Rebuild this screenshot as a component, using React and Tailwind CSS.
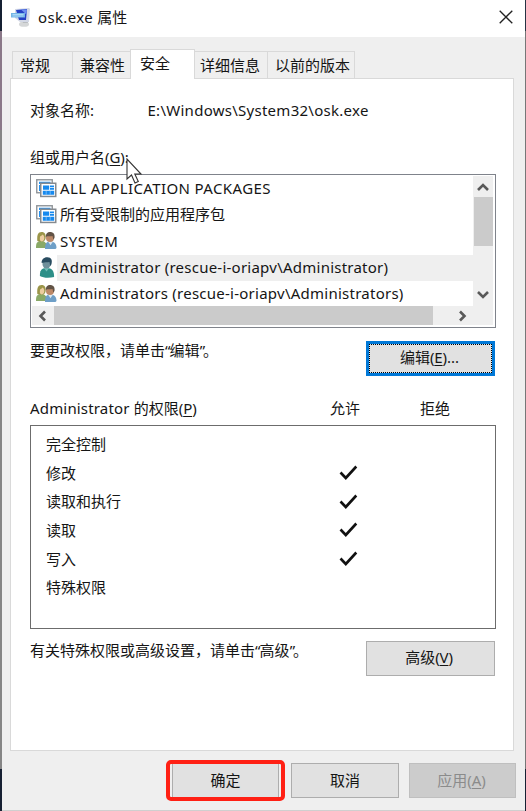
import React from 'react';

function T({ children, className = '' }) {
  return <span className={`whitespace-pre ${className}`}>{children}</span>;
}

function Key({ k }) {
  return (
    <span className="tracking-[-0.1px]">
      (<span className="underline decoration-1 underline-offset-2">{k}</span>)
    </span>
  );
}

function Quoted({ children }) {
  return (
    <>
      <span className="tracking-[-0.8px]">“</span>
      {children}
      <span className="tracking-[-2px]">”</span>
    </>
  );
}

function AppIcon() {
  return (
    <svg width="21" height="21" viewBox="0 0 21 21">
      <ellipse cx="13" cy="17.2" rx="5" ry="2.6" fill="#d5d7d8" />
      <path d="M11 13h5l1 3h-5z" fill="#b9bdc0" />
      <path d="M4 2l14-1 1 1-1 13-9 0-5-4z" fill="#d3d8e6" />
      <path d="M5 3l11-1-1 11H8z" fill="#2440c4" />
      <path d="M10 2.5h6l-.7 5z" fill="#6d8df0" />
      <path d="M0 6h14v4.5H0z" fill="#74b5e6" />
      <path d="M1.5 7.5h11M1.5 9h11" stroke="#b9e0fa" strokeWidth=".8" />
    </svg>
  );
}

function PackageIcon() {
  return (
    <svg width="21" height="19" viewBox="0 0 21 19">
      <rect x=".75" y=".75" width="15.5" height="13" fill="#fff" stroke="#90959a" strokeWidth="1.4" />
      <path d="M3 2.800h11.500V5H3zM3 6h2v6H3z" fill="#2490ee" />
      <rect x="4.75" y="4.25" width="15" height="13.2" fill="#fff" stroke="#858a8f" strokeWidth="1.5" />
      <path d="M7 6.500h6.200v4.200H7zM14 6.500h4v1.700h-4zM14 9h4v1.700h-4zM6.800 11.800h11.400v4H6.800z" fill="#1689ee" />
      <path d="M10.200 12v3.600M14.200 12v3.600" stroke="#a8d5fa" strokeWidth=".6" />
    </svg>
  );
}

function GroupIcon() {
  return (
    <svg width="21" height="19" viewBox="0 0 21 19">
      <path d="M0 17c0-5 1-7 5-7s6 2 6 7z" fill="#8aa967" />
      <path d="M1.300 10C.8 4 2 1 5.500 1S10 3 9.500 8L8 10.500H3z" fill="#9b9549" />
      <path d="M4 5.500C5.500 5 6 4 6.500 3.500 8 4.500 8.600 6 8.200 8 7.500 11 4.500 11.300 3.800 8.500z" fill="#edcda0" />
      <path d="M9 18c0-5 1-7.500 5-7.500s6.500 2 6.500 6.500l-1 1z" fill="#6e9fc7" />
      <path d="M12 10.500l2.500 3.800L17 10.500z" fill="#dce9f1" />
      <circle cx="14" cy="7" r="4" fill="#bd8968" />
      <path d="M9.700 6.500C9.700 2.500 11.500 1 14 1c3.200 0 5.200 2 4.500 6l-1.200 1.500-.8-3.500c-2 .5-3.500.2-5.500.2z" fill="#625346" />
    </svg>
  );
}

function UserIcon() {
  return (
    <svg width="16" height="21" viewBox="0 0 18 21" preserveAspectRatio="none">
      <path d="M1 19c0-5 1-8 7.500-8S17 14 17 20c-5 1.200-12 1.200-16-1z" fill="#2d8f88" />
      <path d="M5.500 11l3 3.500 3-3.500z" fill="#71bdb7" />
      <circle cx="8.500" cy="7" r="4.600" fill="#6f909b" />
      <path d="M3 6C2.500 2.500 6 0 9.500.3c4.500 0 5.800 3 4.500 7l-1.300 2-.9-4.300c-3 .7-5-.2-8.500 1z" fill="#294c60" />
    </svg>
  );
}

function Chevron({ d }) {
  return (
    <svg width="14" height="14" viewBox="0 0 14 14" fill="none" stroke="#595959" strokeWidth="2.600">
      <path d={d} />
    </svg>
  );
}

const tabBase = 'mt-[2px] flex h-[27px] items-center border-t border-[#d9d9d9]';

const principals = [
  { icon: 'pkg', text: 'ALL APPLICATION PACKAGES', cls: 'tracking-[0.39px]' },
  { icon: 'pkg', text: '所有受限制的应用程序包', cls: '' },
  { icon: 'grp', text: 'SYSTEM', cls: 'tracking-[0.5px]' },
  { icon: 'usr', text: 'Administrator (rescue-i-oriapv\\Administrator)', cls: 'tracking-[0.24px]', selected: true },
  { icon: 'grp', text: 'Administrators (rescue-i-oriapv\\Administrators)', cls: 'tracking-[0.25px]' },
];

const permissions = [
  ['完全控制', false],
  ['修改', true],
  ['读取和执行', true],
  ['读取', true],
  ['写入', true],
  ['特殊权限', false],
];

export default function App() {
  return (
    <div className='flex h-[811px] w-[526px] overflow-hidden bg-[#efefef] font-["Noto_Sans","Noto_Sans_CJK_SC",sans-serif] text-[15px] leading-[20px] text-[#151515]'>
      <div className="flex w-[2px] shrink-0 flex-col">
        <div className="h-[31px] bg-[#152033]" />
        <div className="h-[99px] bg-[#8a7888]" />
        <div className="grow bg-[#858585]" />
        <div className="h-[42px] bg-[#172033]" />
      </div>
      <div className="flex w-[523px] shrink-0 flex-col border-b border-[#cfcfcf]">
        <header className="flex h-[37px] shrink-0 items-center bg-white pb-[3px] pl-[9px] pr-[12px]">
          <AppIcon />
          <T className="ml-[6px]"><span className="tracking-[0.35px]">osk.exe </span>属性</T>
          <svg className="ml-auto" width="14" height="14" viewBox="0 0 14 14" stroke="#222" strokeWidth="1.300">
            <path d="M.7.7l12.600 12.600M13.300.7L.7 13.300" />
          </svg>
        </header>

        <nav className="mt-[12px] flex h-[29px] shrink-0 pl-[10px]">
          <div className={`${tabBase} w-[60px] border-l pl-[7px]`}><T>常规</T></div>
          <div className={`${tabBase} w-[58px] border-l pl-[7px]`}><T>兼容性</T></div>
          <div className="z-10 flex h-[30px] w-[65px] border-x border-t border-[#d9d9d9] bg-white pl-[9px] pt-[3px]"><T>安全</T></div>
          <div className={`${tabBase} w-[72px] pl-[5px]`}><T>详细信息</T></div>
          <div className={`${tabBase} w-[88px] border-x pl-[7px]`}><T>以前的版本</T></div>
        </nav>

        <main className="ml-[8px] flex h-[673px] w-[504px] shrink-0 flex-col border border-[#d9d9d9] bg-white pl-[19px] pt-[21px]">
          <div className="flex h-[20px] shrink-0">
            <T className="w-[117.500px]">对象名称:</T>
            <T className="tracking-[0.27px]">E:\Windows\System32\osk.exe</T>
          </div>
          <div className="relative mt-[27px] h-[20px] shrink-0">
            <T>组或用户名<Key k="G" />:</T>
            <svg className="absolute left-[96px] top-[11px] z-20" width="17" height="27" viewBox="0 0 17 27">
              <path d="M1 1v20l4.500-4 3.500 8 3.300-1.500-3.500-7.500H15z" fill="#fff" stroke="#333" strokeWidth="1.100" />
            </svg>
          </div>

          <section className="mt-[7px] flex h-[154px] w-[466px] shrink-0 flex-col border border-[#7f838b] pl-px pr-[2px] pt-px">
            <div className="flex h-[130px]">
              <div className="flex w-[441px] flex-col">
                {principals.map((p) => (
                  <div key={p.text} className="flex h-[26.300px] shrink-0 items-center">
                    <div className="flex w-[25px] justify-end">
                      <div className="flex w-[21px] justify-center pb-[2px]">
                        {p.icon === 'pkg' && <PackageIcon />}
                        {p.icon === 'grp' && <GroupIcon />}
                        {p.icon === 'usr' && <UserIcon />}
                      </div>
                    </div>
                    <div className={`flex h-full grow items-center pb-[2px] pl-[3px] ${p.selected ? 'bg-[#efefef]' : ''}`}>
                      <T className={p.cls}>{p.text}</T>
                    </div>
                  </div>
                ))}
              </div>
              <div className="flex w-[20px] flex-col items-center bg-[#efefef]">
                <div className="flex h-[21px] items-center"><Chevron d="M2 10l5-5 5 5" /></div>
                <div className="h-[49px] w-[19px] bg-[#cbcbcb]" />
                <div className="mt-auto flex h-[22px] items-center"><Chevron d="M2 4l5 5 5-5" /></div>
              </div>
            </div>
            <div className="flex h-[19px] items-center bg-[#efefef]">
              <div className="flex w-[22px] justify-center"><Chevron d="M9 2.500L4.500 7L9 11.500" /></div>
              <div className="h-[19px] w-[379px] bg-[#cbcbcb]" />
              <div className="ml-[22px]"><Chevron d="M5 2.500L9.500 7L5 11.500" /></div>
            </div>
          </section>

          <div className="mt-[13px] flex h-[35px] w-[465px] shrink-0 justify-between">
            <T className="-mt-px">要更改权限，请单击<Quoted>编辑</Quoted>。</T>
            <button className="flex w-[129px] border-[3px] border-[#0078d7] bg-[#e1e1e1]">
              <span className="flex h-full w-full items-center justify-center border border-dotted border-black pb-[3px] pr-[2px]"><T>编辑<Key k="E" />...</T></span>
            </button>
          </div>

          <div className="mt-[22px] flex h-[20px] shrink-0">
            <T className="w-[300px]"><span className="tracking-[0.17px]">Administrator </span>的权限<Key k="P" /></T>
            <T className="w-[90px]">允许</T>
            <T>拒绝</T>
          </div>

          <section className="mt-[7px] flex h-[204px] w-[466px] shrink-0 flex-col border border-[#6c6c6c] pl-[15px] pt-[4px]">
            {permissions.map(([name, allowed]) => (
              <div key={name} className="flex h-[28.700px] shrink-0 items-center">
                <T className="w-[293px] pb-px">{name}</T>
                {allowed && (
                  <svg width="19" height="16" viewBox="0 0 19 16" fill="none" stroke="#111" strokeWidth="2.600">
                    <path d="M1.500 7.500l5.300 5.500L17.300 1.500" />
                  </svg>
                )}
              </div>
            ))}
          </section>

          <div className="mt-[12px] flex h-[35px] w-[465px] shrink-0 justify-between">
            <T className="-mt-px">有关特殊权限或高级设置，请单击<Quoted>高级</Quoted>。</T>
            <button className="flex w-[129px] items-center justify-center border border-[#adadad] bg-[#e1e1e1] pb-[3px] pr-[3px]"><T>高级<Key k="V" /></T></button>
          </div>
        </main>

        <footer className="mt-[9px] flex h-[41px] shrink-0 items-center pl-[164px]">
          <div className="flex h-[41px] w-[119px] rounded-[5px] border-4 border-[#ff2014] px-[2px]">
            <button className="flex grow items-center justify-center border-x border-[#adadad] bg-[#e1e1e1] pb-[2px]"><T>确定</T></button>
          </div>
          <button className="ml-[6px] flex h-[35px] w-[108px] items-center justify-center border border-[#adadad] bg-[#e1e1e1] pb-[2px]"><T>取消</T></button>
          <button className="ml-[10px] flex h-[35px] w-[107px] items-center justify-center border border-[#bfbfbf] bg-[#cccccc] pb-[2px] pr-[2px] text-[#8b8b8b]"><T>应用<Key k="A" /></T></button>
        </footer>
      </div>
      <div className="flex w-px shrink-0 flex-col">
        <div className="h-[31px] bg-[#263344]" />
        <div className="grow bg-[#777]" />
        <div className="h-[42px] bg-[#172033]" />
      </div>
    </div>
  );
}
